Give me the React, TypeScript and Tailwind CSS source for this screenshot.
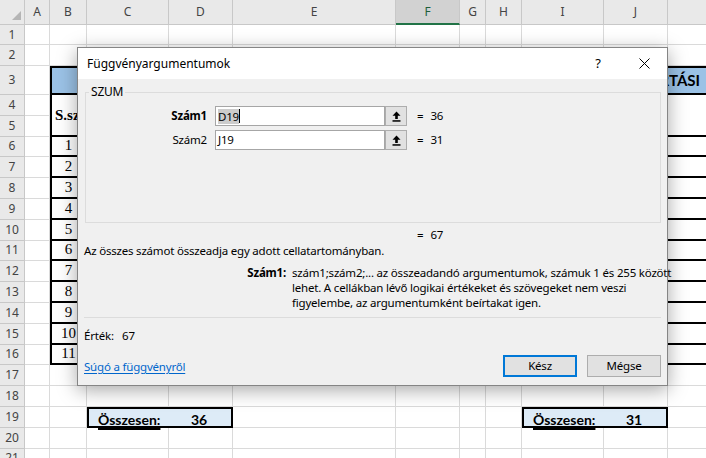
import React from 'react';

const COLS = ['', 'A', 'B', 'C', 'D', 'E', 'F', 'G', 'H', 'I', 'J', ''];
const ROWS = Array.from({ length: 21 }, (_, i) => i + 1);
const GRID =
  'grid grid-cols-[25px_25px_37px_82px_64px_163px_64px_26px_36px_82px_64px_60px] grid-rows-[25px_20px_21px_29px_repeat(18,20.8px)]';

function CornerCell() {
  return (
    <div className="bg-[#e9e9e9] border-r border-b border-[#c8c8c8] flex items-end justify-end pr-[3px] pb-[4px]">
      <svg width="9" height="9" viewBox="0 0 9 9">
        <path d="M9 0 V9 H0 Z" fill="#b5b5b5" />
      </svg>
    </div>
  );
}

function SheetBackground() {
  return (
    <div className={`${GRID} col-start-1 row-start-1`}>
      {COLS.map((c, i) =>
        i === 0 ? (
          <CornerCell key="corner" />
        ) : (
          <div
            key={'h' + i}
            className={
              c === 'F'
                ? 'bg-[#d2d2d2] border-r border-[#c8c8c8] border-b-2 border-b-[#217346] flex items-center justify-center text-[12px] text-[#1e5e3a]'
                : 'bg-[#e9e9e9] border-r border-b border-[#c8c8c8] flex items-center justify-center text-[12px] text-[#444]'
            }
          >
            {c}
          </div>
        )
      )}
      {ROWS.map((r) =>
        COLS.map((_, i) =>
          i === 0 ? (
            <div
              key={r + '-' + i}
              className="bg-[#e9e9e9] border-r border-b border-[#c8c8c8] flex items-center justify-center text-[12px] text-[#444]"
            >
              {r}
            </div>
          ) : (
            <div key={r + '-' + i} className="border-r border-b border-[#dadada]" />
          )
        )
      )}
    </div>
  );
}

function SumBox({ value, area }: { value: string; area: string }) {
  return (
    <div className={`${area} row-start-20 border-2 border-black bg-[#ddebf7] grid grid-cols-[80px_1fr] items-center font-['Lato',sans-serif] font-bold text-[14px] text-black`}>
      <span className="pl-[9px] underline decoration-[1.5px] underline-offset-[3px]">Összesen:</span>
      <span className="text-center pr-[2px]">{value}</span>
    </div>
  );
}

function SheetContent() {
  const nums = Array.from({ length: 11 }, (_, i) => i + 1);
  return (
    <div className={`${GRID} col-start-1 row-start-1`}>
      <div className="col-start-3 col-end-13 row-start-4 row-end-18 grid grid-cols-[37px_581px_60px] grid-rows-[29px_41.6px_repeat(11,20.8px)] bg-white">
        <div className="col-span-3 bg-[#9bc2e6] border-2 border-black flex items-center justify-end pr-[26px] font-['Lato',sans-serif] font-bold text-[15px] text-black">
          NYILVÁNTARTÁSI
        </div>
        <div className="border-l-2 border-r-2 border-b-2 border-black flex items-center pl-[3px] overflow-hidden whitespace-nowrap font-['Liberation_Serif',serif] font-bold text-[15px]">
          S.szám
        </div>
        <div className="border-r-2 border-b-2 border-black" />
        <div className="border-b-2 border-black" />
        {nums.map((n) => (
          <React.Fragment key={n}>
            <div className="border-l-2 border-r-2 border-b-2 border-black flex items-center justify-center font-['Liberation_Serif',serif] text-[15px] leading-none">
              {n}
            </div>
            <div className="border-r-2 border-b-2 border-black" />
            <div className="border-b-2 border-black" />
          </React.Fragment>
        ))}
      </div>
      <SumBox area="col-start-4 col-end-6" value="36" />
      <SumBox area="col-start-10 col-end-12" value="31" />
    </div>
  );
}

function RefButtonIcon() {
  return (
    <svg width="9" height="11" viewBox="0 0 9 11">
      <path d="M4.5 0.5 L0.5 4.8 H3.2 V8 H5.8 V4.8 H8.5 Z" fill="#000" />
      <rect x="0.5" y="9.2" width="8" height="1.5" fill="#000" />
    </svg>
  );
}

function ArgRow({ label, bold, value, result, active }: { label: string; bold?: boolean; value: string; result: string; active?: boolean }) {
  return (
    <div className="flex items-center h-[20px]">
      <span className={`w-[121px] text-right ${bold ? 'font-bold' : ''}`}>{label}</span>
      <div className="ml-[8px] w-[170px] h-[20px] bg-white border border-[#a6a6a6] flex items-center pl-[2px]">
        {active ? (
          <>
            <span className="bg-[#cccccc] leading-[15px]">{value}</span>
            <span className="w-px h-[14px] bg-black" />
          </>
        ) : (
          <span>{value}</span>
        )}
      </div>
      <div className="w-[22px] h-[20px] bg-[#e1e1e1] border border-[#adadad] flex items-center justify-center">
        <RefButtonIcon />
      </div>
      <span className="ml-[10px]">=</span>
      <span className="ml-[7px]">{result}</span>
    </div>
  );
}

function Dialog() {
  return (
    <div className="absolute left-[77px] top-[47px] w-[591px] h-[339px] bg-[#f0f0f0] border border-[#858585] shadow-[0_4px_18px_rgba(0,0,0,0.35)] flex flex-col font-['Noto_Sans',sans-serif] text-[11.5px] tracking-[-0.2px] text-black">
      <div className="h-[31px] shrink-0 bg-white flex items-center pl-[9px] text-[12px] tracking-normal">
        <span className="flex-1">Függvényargumentumok</span>
        <span className="w-[46px] text-center text-[13px]">?</span>
        <span className="w-[46px] flex justify-center">
          <svg width="11" height="11" viewBox="0 0 11 11">
            <path d="M0.5 0.5 L10.5 10.5 M10.5 0.5 L0.5 10.5" stroke="#000" strokeWidth="1" />
          </svg>
        </span>
      </div>

      <div className="flex-1 flex flex-col px-[6px]">
        <fieldset className="ml-[1px] mt-[5px] h-[139px] border border-[#dcdcdc] pt-[6px]">
          <legend className="ml-[3px] px-[2px] leading-[16px] text-[12px]">SZUM</legend>
          <ArgRow label="Szám1" bold value="D19" result="36" active />
          <div className="mt-[4px]">
            <ArgRow label="Szám2" value="J19" result="31" />
          </div>
        </fieldset>

        <div className="mt-[4px] h-[16px] flex items-center pl-[333px]">
          <span>=</span>
          <span className="ml-[7px]">67</span>
        </div>
        <div className="h-[16px] flex items-center whitespace-nowrap">Az összes számot összeadja egy adott cellatartományban.</div>

        <div className="mt-[6px] flex leading-[15px] whitespace-nowrap">
          <span className="w-[202px] shrink-0 text-right font-bold">Szám1:</span>
          <span className="ml-[6px]">
            szám1;szám2;... az összeadandó argumentumok, számuk 1 és 255 között
            <br />
            lehet. A cellákban lévő logikai értékeket és szövegeket nem veszi
            <br />
            figyelembe, az argumentumként beírtakat igen.
          </span>
        </div>

        <div className="mt-[7px] h-px bg-[#dcdcdc]" />

        <div className="mt-[10px] h-[16px] flex items-center">
          <span className="w-[38px]">Érték:</span>
          <span>67</span>
        </div>

        <div className="mt-[11px] flex items-end">
          <a className="flex-1 mb-[2px] text-[#0066cc] underline underline-offset-2">Súgó a függvényről</a>
          <button className="w-[74px] h-[22px] bg-[#e1e1e1] border-2 border-[#0078d7] flex items-center justify-center">
            Kész
          </button>
          <button className="ml-[10px] w-[74px] h-[22px] bg-[#e1e1e1] border border-[#adadad] flex items-center justify-center">
            Mégse
          </button>
        </div>
      </div>
    </div>
  );
}

export default function App() {
  return (
    <div className="relative w-[706px] h-[458px] overflow-hidden bg-white font-['Noto_Sans',sans-serif]">
      <div className="grid">
        <SheetBackground />
        <SheetContent />
      </div>
      <Dialog />
    </div>
  );
}
